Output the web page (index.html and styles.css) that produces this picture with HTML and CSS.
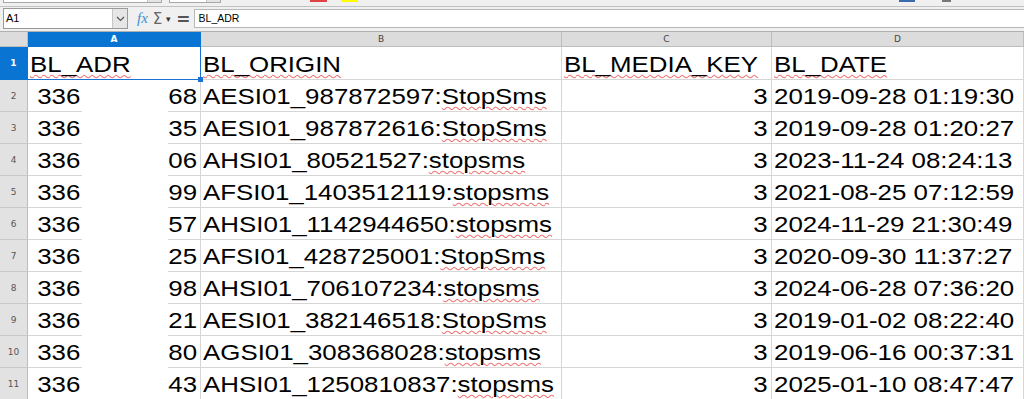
FILE: index.html
```html
<!DOCTYPE html>
<html lang="en">

<head>
  <meta charset="UTF-8" />
  <meta name="viewport" content="width=device-width, initial-scale=1.0" />
  <title>BL_ADR - Calc</title>
  <link rel="stylesheet" href="styles.css">
</head>

<body>
  <!-- Toolbar (cut off at the top) -->
  <div class="toolbar">
    <span class="tb-box font-name"><i></i></span>
    <span class="tb-box font-size"><i></i></span>
    <span class="swatch red"></span>
    <span class="swatch yellow"></span>
    <span class="swatch blue"></span>
    <span class="swatch gray"></span>
  </div>

  <!-- Formula bar -->
  <div class="formula-bar">
    <div class="name-box">
      <span class="name-text">A1</span>
      <span class="name-btn">
        <svg width="9" height="6" viewBox="0 0 9 6"><path d="M1 1l3.5 3.5L8 1" fill="none" stroke="#555" stroke-width="1.2"/></svg>
      </span>
    </div>
    <span class="fx">fx</span>
    <span class="sigma">&Sigma;</span>
    <span class="drop">&#9662;</span>
    <span class="equals">=</span>
    <div class="input-line">BL_ADR</div>
  </div>

  <!-- Sheet -->
  <div class="sheet">
    <div class="corner"></div>
    <div class="colhead active">A</div>
    <div class="colhead">B</div>
    <div class="colhead">C</div>
    <div class="colhead">D</div>

    <div class="rowhead active">1</div>
    <div class="cell sel"><span class="t sp">BL_ADR</span></div>
    <div class="cell"><span class="t sp">BL_ORIGIN</span></div>
    <div class="cell"><span class="t sp">BL_MEDIA_KEY</span></div>
    <div class="cell"><span class="t sp">BL_DATE</span></div>

    <div class="rowhead">2</div>
    <div class="cell"><span class="t"> 336</span><span class="mask"></span><span class="t rt">68</span></div>
    <div class="cell"><span class="t">AESI01_987872597:<span class="sp">StopSms</span></span></div>
    <div class="cell r"><span class="t">3</span></div>
    <div class="cell"><span class="t">2019-09-28 01:19:30</span></div>

    <div class="rowhead">3</div>
    <div class="cell"><span class="t"> 336</span><span class="mask"></span><span class="t rt">35</span></div>
    <div class="cell"><span class="t">AESI01_987872616:<span class="sp">StopSms</span></span></div>
    <div class="cell r"><span class="t">3</span></div>
    <div class="cell"><span class="t">2019-09-28 01:20:27</span></div>

    <div class="rowhead">4</div>
    <div class="cell"><span class="t"> 336</span><span class="mask"></span><span class="t rt">06</span></div>
    <div class="cell"><span class="t">AHSI01_80521527:<span class="sp">stopsms</span></span></div>
    <div class="cell r"><span class="t">3</span></div>
    <div class="cell"><span class="t">2023-11-24 08:24:13</span></div>

    <div class="rowhead">5</div>
    <div class="cell"><span class="t"> 336</span><span class="mask"></span><span class="t rt">99</span></div>
    <div class="cell"><span class="t">AFSI01_1403512119:<span class="sp">stopsms</span></span></div>
    <div class="cell r"><span class="t">3</span></div>
    <div class="cell"><span class="t">2021-08-25 07:12:59</span></div>

    <div class="rowhead">6</div>
    <div class="cell"><span class="t"> 336</span><span class="mask"></span><span class="t rt">57</span></div>
    <div class="cell"><span class="t">AHSI01_1142944650:<span class="sp">stopsms</span></span></div>
    <div class="cell r"><span class="t">3</span></div>
    <div class="cell"><span class="t">2024-11-29 21:30:49</span></div>

    <div class="rowhead">7</div>
    <div class="cell"><span class="t"> 336</span><span class="mask"></span><span class="t rt">25</span></div>
    <div class="cell"><span class="t">AFSI01_428725001:<span class="sp">StopSms</span></span></div>
    <div class="cell r"><span class="t">3</span></div>
    <div class="cell"><span class="t">2020-09-30 11:37:27</span></div>

    <div class="rowhead">8</div>
    <div class="cell"><span class="t"> 336</span><span class="mask"></span><span class="t rt">98</span></div>
    <div class="cell"><span class="t">AHSI01_706107234:<span class="sp">stopsms</span></span></div>
    <div class="cell r"><span class="t">3</span></div>
    <div class="cell"><span class="t">2024-06-28 07:36:20</span></div>

    <div class="rowhead">9</div>
    <div class="cell"><span class="t"> 336</span><span class="mask"></span><span class="t rt">21</span></div>
    <div class="cell"><span class="t">AESI01_382146518:<span class="sp">StopSms</span></span></div>
    <div class="cell r"><span class="t">3</span></div>
    <div class="cell"><span class="t">2019-01-02 08:22:40</span></div>

    <div class="rowhead">10</div>
    <div class="cell"><span class="t"> 336</span><span class="mask"></span><span class="t rt">80</span></div>
    <div class="cell"><span class="t">AGSI01_308368028:<span class="sp">stopsms</span></span></div>
    <div class="cell r"><span class="t">3</span></div>
    <div class="cell"><span class="t">2019-06-16 00:37:31</span></div>

    <div class="rowhead">11</div>
    <div class="cell"><span class="t"> 336</span><span class="mask"></span><span class="t rt">43</span></div>
    <div class="cell"><span class="t">AHSI01_1250810837:<span class="sp">stopsms</span></span></div>
    <div class="cell r"><span class="t">3</span></div>
    <div class="cell"><span class="t">2025-01-10 08:47:47</span></div>
  </div>
</body>

</html>
```

FILE: styles.css
```css
body {
  margin: 0;
  height: 399px;
  overflow: hidden;
  background: #f0f0f0;
  font-family: "Liberation Sans", Arial, sans-serif;
  color: #000;
}

/* Toolbar remnants */
.toolbar {
  display: flex;
  align-items: flex-start;
  height: 6px;
  border-bottom: 1px solid #c2c2c2;
}

.tb-box {
  display: flex;
  justify-content: flex-end;
  height: 2px;
  background: #fff;
  border: 1px solid #a8a8a8;
  border-top: none;
}

.tb-box i {
  width: 13px;
  background: #e4e4e4;
  border-left: 1px solid #c4c4c4;
}

.font-name {
  margin-left: 3px;
  width: 157px;
}

.font-size {
  margin-left: 7px;
  width: 50px;
}

.swatch {
  height: 2px;
}

.red {
  margin-left: 89px;
  width: 17px;
  background: #e04343;
}

.yellow {
  margin-left: 14px;
  width: 17px;
  background: #ffff00;
}

.blue {
  margin-left: 541px;
  width: 16px;
  background: #3a6bb0;
}

.gray {
  margin-left: 27px;
  width: 9px;
  background: #777;
}

/* Formula bar */
.formula-bar {
  display: flex;
  align-items: center;
  height: 21px;
  margin-top: 1px;
}

.name-box {
  display: flex;
  align-items: stretch;
  margin-left: 3px;
  width: 123px;
  height: 19px;
  background: #fff;
  border: 1px solid #9a9a9a;
}

.name-text {
  flex: 1;
  padding-left: 2px;
  font-size: 11px;
  line-height: 19px;
}

.name-btn {
  display: flex;
  align-items: center;
  justify-content: center;
  width: 14px;
  background: #e6e6e6;
  border-left: 1px solid #c6c6c6;
}

.fx {
  margin-left: 9px;
  font-family: "Liberation Serif", serif;
  font-style: italic;
  font-size: 15px;
  color: #3d8fd1;
}

.sigma {
  margin-left: 5px;
  font-family: "DejaVu Sans", sans-serif;
  font-size: 15px;
  color: #666;
}

.drop {
  margin-left: 4px;
  font-size: 9px;
  color: #333;
}

.equals {
  margin-left: 5px;
  font-family: "DejaVu Sans", sans-serif;
  font-weight: bold;
  font-size: 17px;
  color: #555;
}

.input-line {
  flex: 1;
  align-self: flex-start;
  margin-top: 1px;
  margin-left: 3px;
  height: 17px;
  padding-left: 4px;
  background: #fff;
  border: 1px solid #b8b8b8;
  border-right: none;
  font-size: 10.5px;
  line-height: 17px;
}

/* Sheet */
.sheet {
  display: grid;
  grid-template-columns: 28px 173px 361px 210px 1fr;
  grid-template-rows: 15px 33px;
  grid-auto-rows: 32px;
  margin-top: 2px;
  border-top: 1px solid #b0b0b0;
  background: #fff;
}

.corner,
.colhead {
  background: #dcdcdc;
  border-right: 1px solid #bdbdbd;
  border-bottom: 1px solid #bdbdbd;
}

.colhead {
  font-family: "DejaVu Sans", sans-serif;
  font-size: 9px;
  line-height: 14px;
  text-align: center;
  color: #444;
}

.rowhead {
  display: flex;
  align-items: center;
  justify-content: center;
  background: #e2e2e2;
  border-right: 1px solid #bdbdbd;
  border-bottom: 1px solid #c8c8c8;
  font-family: "DejaVu Sans", sans-serif;
  font-size: 9px;
  color: #555;
}

.colhead.active,
.rowhead.active {
  background: #0a74d2;
  border-color: #0a74d2;
  color: #fff;
  font-weight: bold;
}

.cell {
  display: flex;
  align-items: flex-end;
  padding: 0 3px 1px 2px;
  border-right: 1px solid #d6d6d6;
  border-bottom: 1px solid #d6d6d6;
  font-size: 22.6px;
  line-height: 26px;
  white-space: nowrap;
}

.cell.r {
  justify-content: flex-end;
}

.t {
  display: inline-block;
  white-space: pre;
  transform: scaleX(1.145);
  transform-origin: left bottom;
}

.r .t,
.t.rt {
  transform-origin: right bottom;
}

.mask {
  flex: 1;
  align-self: stretch;
  margin: 0 4px -2px 8px;
  background: #fff;
}

.sp {
  text-decoration: underline wavy #f07575;
  text-decoration-thickness: 1px;
  text-underline-offset: 2px;
}

.sel {
  position: relative;
  border-right-color: #1a73d4;
  border-bottom-color: #1a73d4;
}

.sel::after {
  content: "";
  position: absolute;
  right: -3px;
  bottom: -3px;
  width: 5px;
  height: 5px;
  background: #1a73d4;
}
```
